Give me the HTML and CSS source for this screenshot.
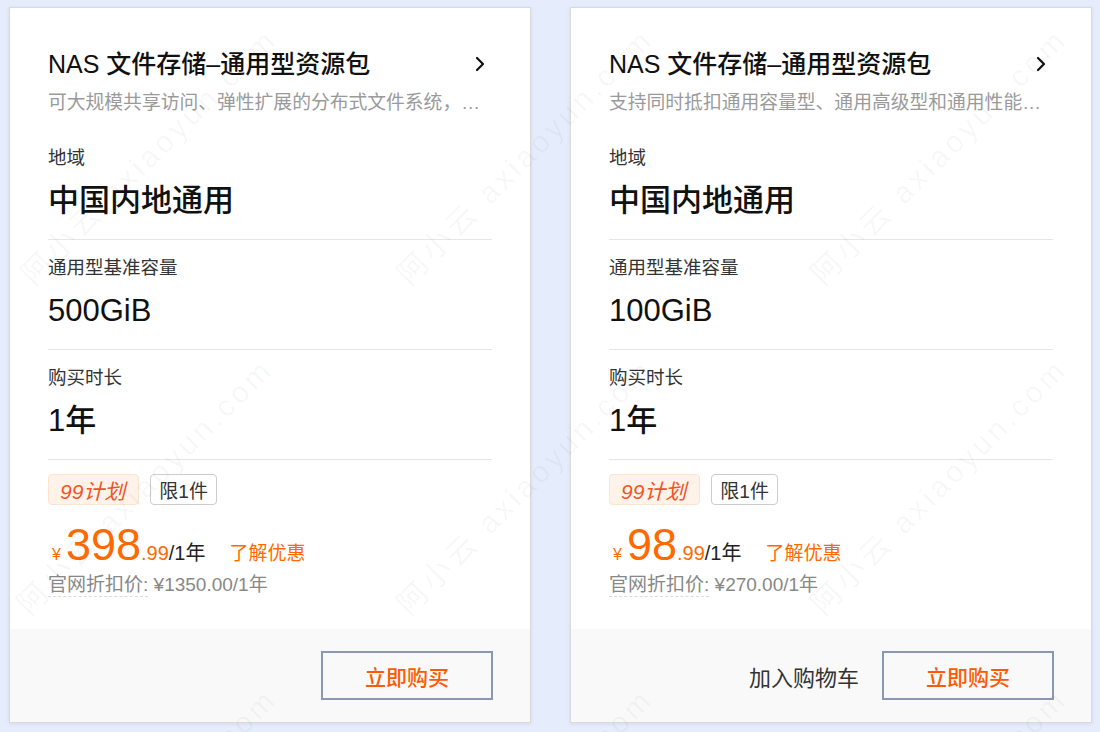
FILE: index.html
```html
<!DOCTYPE html>
<html lang="zh-CN">
<head>
<meta charset="utf-8">
<title>NAS 文件存储-通用型资源包</title>
<link rel="stylesheet" href="styles.css">
</head>
<body>
<div class="page">
  <div class="card">
    <div class="card-body">
      <div class="title-row">
        <span class="title">NAS 文件存储–通用型资源包</span>
        <svg class="chev" viewBox="0 0 10 16"><polyline points="2,2 8,8 2,14"/></svg>
      </div>
      <div class="desc">可大规模共享访问、弹性扩展的分布式文件系统，…</div>
      <div class="field first"><div class="label">地域</div><div class="value">中国内地通用</div></div>
      <div class="field"><div class="label">通用型基准容量</div><div class="value">500GiB</div></div>
      <div class="field"><div class="label">购买时长</div><div class="value">1年</div></div>
      <div class="tags"><span class="tag tag-plan">99计划</span><span class="tag tag-limit">限1件</span></div>
      <div class="price-row"><span class="cur">¥</span><span class="big">398</span><span class="dec">.99</span><span class="per">/1年</span><span class="promo">了解优惠</span></div>
      <div class="orig"><span class="orig-label">官网折扣价:</span> ¥1350.00/1年</div>
    </div>
    <div class="card-foot">
      <button class="buy">立即购买</button>
    </div>
  </div>
  <div class="card">
    <div class="card-body">
      <div class="title-row">
        <span class="title">NAS 文件存储–通用型资源包</span>
        <svg class="chev" viewBox="0 0 10 16"><polyline points="2,2 8,8 2,14"/></svg>
      </div>
      <div class="desc">支持同时抵扣通用容量型、通用高级型和通用性能…</div>
      <div class="field first"><div class="label">地域</div><div class="value">中国内地通用</div></div>
      <div class="field"><div class="label">通用型基准容量</div><div class="value">100GiB</div></div>
      <div class="field"><div class="label">购买时长</div><div class="value">1年</div></div>
      <div class="tags"><span class="tag tag-plan">99计划</span><span class="tag tag-limit">限1件</span></div>
      <div class="price-row"><span class="cur">¥</span><span class="big">98</span><span class="dec">.99</span><span class="per">/1年</span><span class="promo">了解优惠</span></div>
      <div class="orig"><span class="orig-label">官网折扣价:</span> ¥270.00/1年</div>
    </div>
    <div class="card-foot">
      <span class="cart">加入购物车</span>
      <button class="buy">立即购买</button>
    </div>
  </div>
</div>
<div class="wm-layer" aria-hidden="true">
  <span class="wm wm1">阿小云 axiaoyun.com</span>
  <span class="wm wm2">阿小云 axiaoyun.com</span>
  <span class="wm wm3">阿小云 axiaoyun.com</span>
  <span class="wm wm4">阿小云 axiaoyun.com</span>
  <span class="wm wm5">阿小云 axiaoyun.com</span>
  <span class="wm wm6">阿小云 axiaoyun.com</span>
  <span class="wm wm7">阿小云 axiaoyun.com</span>
  <span class="wm wm8">阿小云 axiaoyun.com</span>
  <span class="wm wm9">阿小云 axiaoyun.com</span>
</div>
</body>
</html>
```

FILE: styles.css
```css
* { box-sizing: border-box; }
html, body { margin: 0; padding: 0; }
body {
  width: 1100px;
  height: 732px;
  overflow: hidden;
  position: relative;
  background: #e5edfc;
  font-family: "Liberation Sans", "Noto Sans CJK SC", sans-serif;
  color: #111;
}
.page {
  display: flex;
  gap: 39px;
  padding: 7px 0 0 9px;
}
.card {
  width: 522px;
  height: 716px;
  background: #fff;
  border: 1px solid #d9d9d9;
  box-shadow: 0 1px 4px rgba(0, 0, 0, 0.08);
  display: flex;
  flex-direction: column;
}
.card-body {
  flex: 1;
  padding: 40px 38px 0 38px;
}
.title-row {
  display: flex;
  align-items: center;
  justify-content: space-between;
  height: 32px;
}
.title {
  font-size: 25px;
  font-weight: 500;
  line-height: 32px;
  color: #111;
}
.chev {
  width: 10px;
  height: 16px;
  margin-right: 7px;
}
.chev polyline {
  fill: none;
  stroke: #111;
  stroke-width: 2.2;
  stroke-linecap: round;
  stroke-linejoin: round;
}
.desc {
  margin-top: 10px;
  font-size: 18.8px;
  line-height: 26px;
  color: #9a9a9a;
  white-space: nowrap;
  overflow: hidden;
}
.field {
  padding: 15px 0 18px;
  border-bottom: 1px solid #e6e6e6;
}
.field.first { padding-top: 29px; }
.label {
  font-size: 18.5px;
  line-height: 26px;
  color: #333;
}
.value {
  margin-top: 10px;
  font-size: 31px;
  font-weight: 500;
  line-height: 40px;
  color: #111;
}
.tags {
  display: flex;
  gap: 11px;
  margin-top: 14px;
}
.tag {
  height: 31px;
  display: inline-flex;
  align-items: center;
  border-radius: 4px;
}
.tag-plan {
  padding: 0 13px 0 11px;
  background: #fff3e9;
  border: 1px solid #fde2cc;
  color: #f0532a;
  font-style: italic;
  font-size: 21px;
}
.tag-limit {
  padding: 0 8px;
  border: 1px solid #cccccc;
  color: #333;
  font-size: 19px;
}
.price-row {
  display: flex;
  align-items: baseline;
  margin-top: 16px;
  height: 48px;
  line-height: 48px;
  color: #ff6a00;
}
.cur { font-size: 16px; margin: 0 5px 0 4px; }
.big { font-size: 45px; }
.dec { font-size: 20px; }
.per { font-size: 20px; color: #222; }
.promo { font-size: 19px; margin-left: 24px; }
.orig {
  margin-top: 3px;
  font-size: 19px;
  line-height: 26px;
  color: #888;
}
.orig-label {
  display: inline-block;
  line-height: 22px;
  border-bottom: 1px dashed #dadada;
}
.card-foot {
  flex: none;
  height: 93px;
  background: #f9f9f9;
  display: flex;
  align-items: center;
  justify-content: flex-end;
  padding-right: 37px;
}
.cart {
  font-size: 22px;
  color: #333;
  margin-right: 23px;
}
.buy {
  width: 172px;
  height: 49px;
  border: 2px solid #8a99b3;
  background: transparent;
  color: #ff5a00;
  font-family: "Liberation Sans", "Noto Sans CJK SC", sans-serif;
  font-size: 21px;
  font-weight: 500;
  padding: 0;
}
.wm-layer {
  position: absolute;
  inset: 0;
  pointer-events: none;
  overflow: hidden;
}
.wm {
  position: absolute;
  font-size: 30px;
  line-height: 30px;
  letter-spacing: 4px;
  white-space: nowrap;
  color: rgba(0, 0, 0, 0.04);
  transform: rotate(-45deg);
  transform-origin: 0 100%;
}
.wm1 { left: 37px; top: 260px; }
.wm2 { left: 413px; top: 260px; }
.wm3 { left: 827px; top: 260px; }
.wm4 { left: 33px; top: 590px; }
.wm5 { left: 413px; top: 590px; }
.wm6 { left: 827px; top: 590px; }
.wm7 { left: 37px; top: 920px; }
.wm8 { left: 413px; top: 920px; }
.wm9 { left: 827px; top: 920px; }
```
